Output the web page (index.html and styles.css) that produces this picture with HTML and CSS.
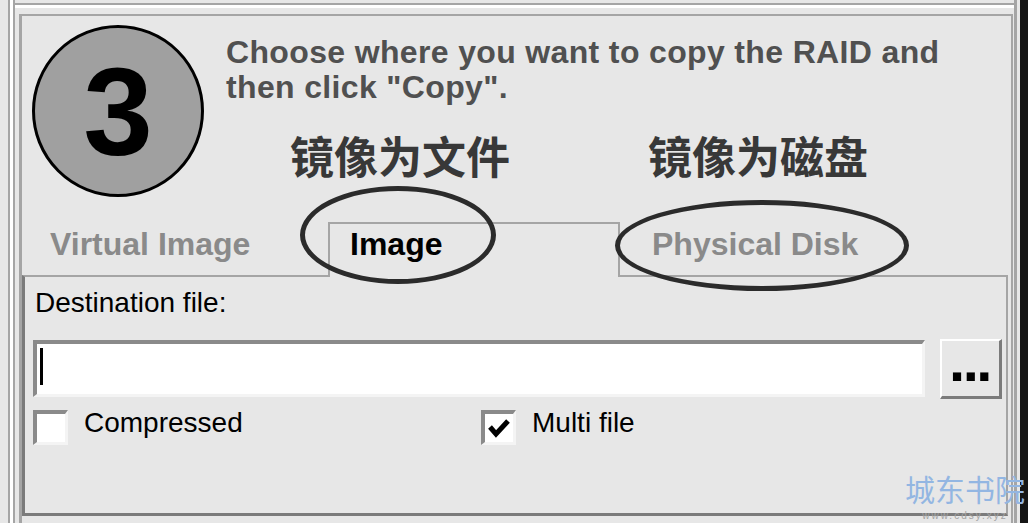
FILE: index.html
```html
<!DOCTYPE html>
<html lang="en">
<head>
    <meta charset="UTF-8">
    <meta name="viewport" content="width=device-width, initial-scale=1.0">
    <title>Copy RAID - Step 3</title>
    <link rel="stylesheet" href="styles.css">
</head>
<body>
    <div class="window">
        <div class="rail-left"></div>

        <div class="main">
            <div class="topbar"></div>

            <div class="group">
                <!-- Step header -->
                <div class="header">
                    <div class="step">3</div>
                    <div class="header-text">
                        <p class="intro">Choose where you want to copy the RAID and<br>then click "Copy".</p>
                        <div class="labels">
                            <span class="label-cn">镜像为文件</span>
                            <span class="label-cn">镜像为磁盘</span>
                        </div>
                    </div>
                </div>

                <!-- Tabs -->
                <div class="tabs">
                    <div class="tab tab-virtual">Virtual Image</div>
                    <div class="tab tab-image">Image</div>
                    <div class="tab tab-disk">Physical Disk</div>
                </div>

                <div class="panel">
                    <div class="field-label">Destination file:</div>
                    <div class="file-row">
                        <div class="file-input"><span class="caret"></span></div>
                        <div class="browse">...</div>
                    </div>
                    <div class="options">
                        <div class="check check-first">
                            <span class="box"></span>
                            <span>Compressed</span>
                        </div>
                        <div class="check">
                            <span class="box">
                                <svg width="28" height="28" viewBox="0 0 28 28">
                                    <path d="M5 13 L11 20 L23 7" fill="none" stroke="#000" stroke-width="5" stroke-linejoin="miter"/>
                                </svg>
                            </span>
                            <span>Multi file</span>
                        </div>
                    </div>
                </div>
            </div>
        </div>

        <div class="rail-right"></div>
        <div class="edge"></div>
    </div>

    <!-- hand-drawn annotation rings -->
    <div class="mark mark-file"></div>
    <div class="mark mark-disk"></div>

    <div class="watermark">城东书院<small>www.cdsy.xyz</small></div>
</body>
</html>
```

FILE: styles.css
```css
body {
    margin: 0;
    width: 1028px;
    height: 523px;
    overflow: hidden;
    position: relative;
    background-color: #e7e7e7;
    font-family: "Liberation Sans", Arial, sans-serif;
    color: #000;
}

.window {
    display: flex;
    height: 523px;
}

/* window frame lines */
.rail-left {
    width: 3px;
    margin-left: 8px;
    background-color: #fff;
    border-left: 2px solid #a5a5a5;
    border-right: 2px solid #a5a5a5;
}

.rail-right {
    width: 3px;
    margin-right: 3px;
    background-color: #a5a5a5;
}

.edge {
    width: 8px;
    background-color: #151515;
}

.main {
    flex: 1;
    display: flex;
    flex-direction: column;
}

.topbar {
    flex: none;
    height: 3px;
    border-bottom: 2px solid #a5a5a5;
    box-shadow: 0 3px 0 #fff;
}

.group {
    flex: 1;
    margin: 9px 1px 0 4px;
    border-top: 2px solid #a5a5a5;
    border-left: 3px solid #a5a5a5;
    border-right: 2px solid #a5a5a5;
}

/* header with the step number */
.header {
    display: flex;
    height: 206px;
    box-sizing: border-box;
    padding: 9px 0 0 10px;
}

.step {
    flex: none;
    width: 172px;
    height: 172px;
    box-sizing: border-box;
    border: 3px solid #000;
    border-radius: 50%;
    background-color: #a0a0a0;
    display: flex;
    align-items: center;
    justify-content: center;
    font-size: 125px;
    font-weight: bold;
    line-height: 1;
}

.header-text {
    margin-left: 22px;
    padding-top: 10px;
}

.intro {
    margin: 0;
    font-size: 32px;
    font-weight: bold;
    line-height: 35px;
    letter-spacing: 0.35px;
    color: #505050;
    white-space: nowrap;
}

.labels {
    display: flex;
    gap: 138px;
    margin-top: 28px;
    padding-left: 64px;
}

.label-cn {
    font-family: "Noto Sans CJK SC", sans-serif;
    font-size: 44px;
    font-weight: bold;
    line-height: 44px;
    color: #383838;
}

/* tabs */
.tabs {
    display: flex;
    height: 53px;
}

.tab {
    box-sizing: border-box;
    padding-top: 6px;
    font-size: 32px;
    font-weight: bold;
    line-height: 32px;
    color: #8a8a8a;
}

.tab-virtual {
    width: 306px;
    padding-left: 28px;
}

.tab-image {
    position: relative;
    width: 292px;
    height: 55px;
    margin-bottom: -2px;
    padding-top: 4px;
    padding-left: 20px;
    border: 2px solid #a5a5a5;
    border-bottom: 0;
    background-color: #e7e7e7;
    color: #000;
}

.tab-disk {
    padding-left: 32px;
}

.panel {
    height: 241px;
    box-sizing: border-box;
    margin-right: 3px;
    padding: 10px 0 0 8px;
    border-top: 2px solid #a5a5a5;
    border-left: 3px solid #7b7b7b;
    border-bottom: 3px solid #7b7b7b;
    border-right: 2px solid #a5a5a5;
}

.field-label {
    margin-left: 2px;
    font-size: 28px;
    line-height: 32px;
}

.file-row {
    display: flex;
    align-items: flex-start;
    gap: 15px;
    margin-top: 20px;
}

.file-input {
    width: 892px;
    height: 57px;
    box-sizing: border-box;
    margin-top: 1px;
    padding: 4px 0 0 3px;
    background-color: #fff;
    border-top: 4px solid #8a8a8a;
    border-left: 4px solid #8a8a8a;
    border-bottom: 3px solid #f4f4f4;
    border-right: 3px solid #f4f4f4;
}

.caret {
    display: block;
    width: 3px;
    height: 37px;
    background-color: #000;
}

.browse {
    width: 62px;
    height: 60px;
    box-sizing: border-box;
    border-top: 2px solid #fff;
    border-left: 2px solid #fff;
    border-right: 3px solid #7b7b7b;
    border-bottom: 3px solid #7b7b7b;
    text-align: center;
    font-size: 58px;
    font-weight: bold;
    line-height: 39px;
    letter-spacing: -2.5px;
    text-indent: -2px;
}

.options {
    display: flex;
    margin-top: 8px;
}

.check {
    display: flex;
    align-items: flex-start;
    font-size: 28px;
    line-height: 32px;
}

.check-first {
    width: 448px;
}

.box {
    flex: none;
    width: 35px;
    height: 35px;
    box-sizing: border-box;
    margin: 3px 16px 0 0;
    background-color: #fff;
    border-top: 4px solid #8a8a8a;
    border-left: 4px solid #8a8a8a;
    border-right: 3px solid #f4f4f4;
    border-bottom: 3px solid #f4f4f4;
}

.box svg {
    display: block;
}

/* annotation rings drawn over the dialog */
.mark {
    position: absolute;
    box-sizing: border-box;
    border: 5px solid #2b2b2b;
    border-radius: 50%;
}

.mark-file {
    left: 300px;
    top: 186px;
    width: 196px;
    height: 98px;
}

.mark-disk {
    left: 615px;
    top: 200px;
    width: 294px;
    height: 91px;
}

.watermark {
    position: absolute;
    left: 904px;
    top: 473px;
    width: 122px;
    font-family: "Noto Sans CJK SC", sans-serif;
    font-size: 30px;
    line-height: 30px;
    color: #93b6e2;
    text-align: center;
}

.watermark small {
    display: block;
    margin-top: 8px;
    font-family: "Liberation Sans", Arial, sans-serif;
    font-size: 10px;
    line-height: 10px;
    letter-spacing: 2px;
    color: #a3a3a3;
}
```
